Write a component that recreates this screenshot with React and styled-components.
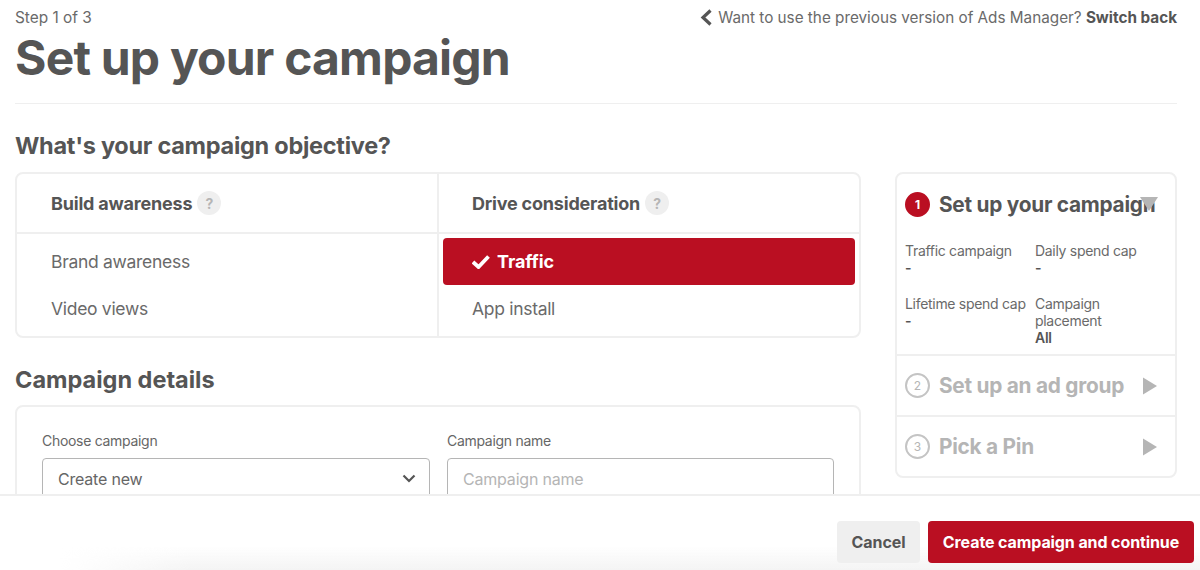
import React from 'react'
import styled, { createGlobalStyle } from 'styled-components'

const GlobalStyle = createGlobalStyle`
    html, body {
        margin: 0;
        padding: 0;
        background: #fff;
    }
    body {
        font-family: Inter, "Liberation Sans", sans-serif;
        color: #555;
    }
    * {
        box-sizing: border-box;
    }
`

const Page = styled.div`
    width: 1200px;
    height: 570px;
    display: flex;
    flex-direction: column;
    overflow: hidden;
`

const Main = styled.main`
    height: 494px;
    flex: none;
    overflow: hidden;
    padding: 0 23px 0 15px;
`

const TopRow = styled.div`
    display: flex;
    justify-content: space-between;
    align-items: center;
    height: 34px;
    font-size: 15.4px;
    color: #6a6a6a;
`

const SwitchBack = styled.div`
    display: flex;
    align-items: center;
    gap: 6px;
    font-size: 15.27px;

    b {
        font-weight: 700;
        color: #555;
    }
`

const Title = styled.h1`
    margin: 0;
    height: 70px;
    padding-bottom: 2px;
    border-bottom: 1px solid #efefef;
    font-size: 48px;
    line-height: 48px;
    font-weight: 700;
    letter-spacing: -0.8px;
    color: #555;
`

const Columns = styled.div`
    display: grid;
    grid-template-columns: 846px 282px;
    column-gap: 34px;
`

const SectionTitle = styled.h2`
    margin: 0;
    height: 68px;
    padding-top: 28px;
    font-size: 23.5px;
    line-height: 28px;
    font-weight: 700;
    letter-spacing: ${p => (p.$first ? '-0.27px' : '0')};
    color: #555;
`

const Card = styled.div`
    border: 2px solid #efefef;
    border-radius: 8px;
    background: #fff;
`

const ObjectiveCard = styled(Card)`
    display: grid;
    grid-template-columns: 420px 1fr;
    height: 166px;
`

const ObjectiveColumn = styled.div`
    display: flex;
    flex-direction: column;
    border-left: ${p => (p.$divided ? '2px solid #efefef' : 'none')};
`

const ObjectiveHead = styled.div`
    display: flex;
    align-items: center;
    gap: 5px;
    height: 60px;
    padding-left: ${p => (p.$divided ? '33px' : '34px')};
    border-bottom: 2px solid #efefef;
    font-size: 18px;
    font-weight: 700;
    letter-spacing: -0.2px;
    color: #555;
`

const Help = styled.span`
    width: 24px;
    height: 24px;
    border-radius: 50%;
    background: #efefef;
    color: #b5b5b5;
    font-size: 14px;
    font-weight: 700;
    display: flex;
    align-items: center;
    justify-content: center;
`

const Options = styled.div`
    padding: 4px 4px 0;
    display: flex;
    flex-direction: column;
`

const Option = styled.div`
    display: flex;
    align-items: center;
    gap: 7px;
    height: 47px;
    padding-left: ${p => (p.$inset ? '29px' : '30px')};
    border-radius: 4px;
    font-size: ${p => (p.$selected ? '18px' : '17.5px')};
    font-weight: ${p => (p.$selected ? 700 : 400)};
    letter-spacing: ${p => (p.$selected ? '-0.1px' : '-0.3px')};
    background: ${p => (p.$selected ? '#ba0f22' : 'transparent')};
    color: ${p => (p.$selected ? '#fff' : '#6a6a6a')};
`

const DetailsCard = styled(Card)`
    height: 120px;
    margin-top: -1px;
    padding: 24px 25px 0;
    display: grid;
    grid-template-columns: 388px 387px;
    column-gap: 17px;
`

const Field = styled.div`
    display: flex;
    flex-direction: column;
`

const FieldLabel = styled.label`
    height: 21px;
    font-size: 14px;
    line-height: 20px;
    letter-spacing: -0.3px;
    color: #666;
    margin-bottom: 6px;
`

const Control = styled.div`
    height: 44px;
    flex: none;
    border: 1px solid #b5b5b5;
    border-radius: 4px;
    padding: 0 13px 3px 15px;
    display: flex;
    align-items: center;
    justify-content: space-between;
    font-size: 16px;
    letter-spacing: -0.2px;
    color: ${p => (p.$placeholder ? '#b5b5b5' : '#666')};
`

const StepsCard = styled(Card)`
    align-self: start;
    margin-top: 68px;
    height: 306px;
    display: flex;
    flex-direction: column;
`

const ActiveStep = styled.div`
    position: relative;
    height: 180px;
    padding: 18px 8px 0;
    flex: none;
`

const StepHead = styled.div`
    display: flex;
    align-items: center;
    gap: 9px;
    white-space: nowrap;
    font-size: 20.8px;
    font-weight: 700;
    letter-spacing: -0.25px;
    color: ${p => (p.$muted ? '#b5b5b5' : '#555')};
`

const StepNumber = styled.span`
    width: 25px;
    height: 25px;
    flex: none;
    border-radius: 50%;
    border: 2px solid ${p => (p.$active ? '#ba0f22' : '#c4c4c4')};
    background: ${p => (p.$active ? '#ba0f22' : '#fff')};
    color: ${p => (p.$active ? '#fff' : '#b5b5b5')};
    font-size: 12px;
    font-weight: ${p => (p.$active ? 700 : 400)};
    letter-spacing: 0;
    display: flex;
    align-items: center;
    justify-content: center;
`

const DropMark = styled.svg`
    position: absolute;
    top: 22px;
    right: 17px;
`

const Stats = styled.div`
    display: grid;
    grid-template-columns: 130px 1fr;
    margin-top: 25px;
    font-size: 14px;
    line-height: 17px;
    letter-spacing: -0.3px;
    color: #6a6a6a;
`

const Stat = styled.div`
    height: ${p => (p.$tall ? '54px' : '53px')};

    span {
        display: block;
        font-weight: 600;
        color: #555;
    }
`

const StepRow = styled.div`
    flex: 1;
    padding: 0 17px 0 8px;
    border-top: 2px solid #efefef;
    display: flex;
    align-items: center;
    justify-content: space-between;
`

const Footer = styled.footer`
    position: relative;
    flex: 1;
    border-top: 2px solid #efefef;
    display: flex;
    justify-content: flex-end;
    align-items: flex-start;
    gap: 8px;
    padding: 25px 6px 0 0;
    background: #fff;

    &::after {
        content: '';
        position: absolute;
        left: 60px;
        right: 0;
        bottom: 0;
        height: 24px;
        background: linear-gradient(to bottom, rgba(244, 244, 244, 0), rgba(244, 244, 244, 1));
        mask-image: linear-gradient(to right, transparent, #000 130px);
        pointer-events: none;
    }
`

const Button = styled.button`
    position: relative;
    z-index: 1;
    height: 42px;
    padding: 0;
    width: ${p => (p.$primary ? '266px' : '83px')};
    border: none;
    border-radius: 4px;
    font-family: inherit;
    font-size: 16px;
    font-weight: 700;
    letter-spacing: -0.1px;
    background: ${p => (p.$primary ? '#ba0f22' : '#efefef')};
    color: ${p => (p.$primary ? '#fff' : '#555')};
`

const PlayIcon = () => (
    <svg width="16" height="18" viewBox="0 0 16 18">
        <path d="M1 0.5 L15 9 L1 17.5 Z" fill="#b5b5b5" />
    </svg>
)

const App = () => {
    return (
        <Page>
            <GlobalStyle />
            <Main>
                <TopRow>
                    <span>Step 1 of 3</span>
                    <SwitchBack>
                        <svg width="12" height="17" viewBox="0 0 12 17">
                            <path d="M10.5 1.5 L3 8.5 L10.5 15.5" fill="none" stroke="#555" strokeWidth="3.2" />
                        </svg>
                        <span>Want to use the previous version of Ads Manager? <b>Switch back</b></span>
                    </SwitchBack>
                </TopRow>
                <Title>Set up your campaign</Title>
                <Columns>
                    <div>
                        <SectionTitle $first>What's your campaign objective?</SectionTitle>
                        <ObjectiveCard>
                            <ObjectiveColumn>
                                <ObjectiveHead>Build awareness <Help>?</Help></ObjectiveHead>
                                <Options>
                                    <Option>Brand awareness</Option>
                                    <Option>Video views</Option>
                                </Options>
                            </ObjectiveColumn>
                            <ObjectiveColumn $divided>
                                <ObjectiveHead $divided>Drive consideration <Help>?</Help></ObjectiveHead>
                                <Options>
                                    <Option $selected $inset>
                                        <svg width="18" height="14" viewBox="0 0 18 14">
                                            <path d="M1 7 L6.5 12 L16.5 1.5" fill="none" stroke="#fff" strokeWidth="3.8" />
                                        </svg>
                                        Traffic
                                    </Option>
                                    <Option $inset>App install</Option>
                                </Options>
                            </ObjectiveColumn>
                        </ObjectiveCard>
                        <SectionTitle>Campaign details</SectionTitle>
                        <DetailsCard>
                            <Field>
                                <FieldLabel>Choose campaign</FieldLabel>
                                <Control>
                                    Create new
                                    <svg width="14" height="9" viewBox="0 0 14 9">
                                        <path d="M1.5 1.5 L7 7 L12.5 1.5" fill="none" stroke="#555" strokeWidth="2.2" />
                                    </svg>
                                </Control>
                            </Field>
                            <Field>
                                <FieldLabel>Campaign name</FieldLabel>
                                <Control $placeholder>Campaign name</Control>
                            </Field>
                        </DetailsCard>
                    </div>
                    <StepsCard>
                        <ActiveStep>
                            <StepHead>
                                <StepNumber $active>1</StepNumber>
                                Set up your campaign
                            </StepHead>
                            <DropMark width="18" height="16" viewBox="0 0 18 16">
                                <path d="M0 1 L18 1 L9 15 Z" fill="#b5b5b5" />
                            </DropMark>
                            <Stats>
                                <Stat>Traffic campaign<span>-</span></Stat>
                                <Stat>Daily spend cap<span>-</span></Stat>
                                <Stat $tall>Lifetime spend cap<span>-</span></Stat>
                                <Stat $tall>Campaign placement<span>All</span></Stat>
                            </Stats>
                        </ActiveStep>
                        <StepRow>
                            <StepHead $muted><StepNumber>2</StepNumber>Set up an ad group</StepHead>
                            <PlayIcon />
                        </StepRow>
                        <StepRow>
                            <StepHead $muted><StepNumber>3</StepNumber>Pick a Pin</StepHead>
                            <PlayIcon />
                        </StepRow>
                    </StepsCard>
                </Columns>
            </Main>
            <Footer>
                <Button>Cancel</Button>
                <Button $primary>Create campaign and continue</Button>
            </Footer>
        </Page>
    )
}

export default App
